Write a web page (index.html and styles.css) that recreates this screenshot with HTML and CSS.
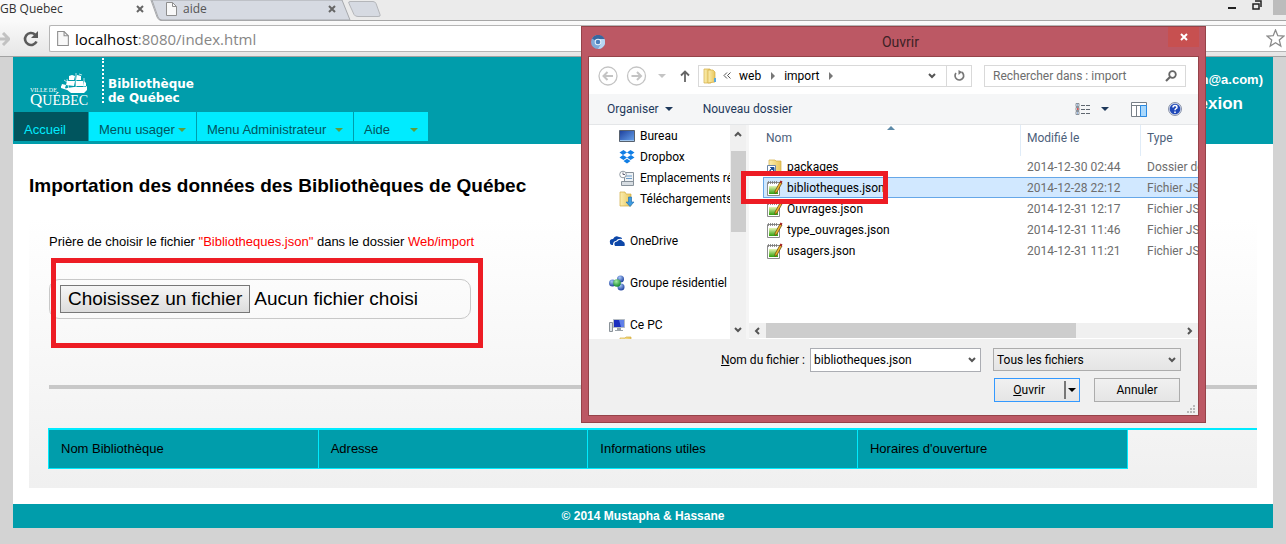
FILE: index.html
```html
<!DOCTYPE html>
<html lang="fr">
<head>
<meta charset="utf-8">
<title>SGB Quebec</title>
<link rel="stylesheet" href="styles.css">
</head>
<body>
<svg class="defs" aria-hidden="true">
  <defs>
    <linearGradient id="folder" x1="0" x2="1"><stop offset="0" stop-color="#fbeeb0"/><stop offset="1" stop-color="#e9c75c"/></linearGradient>
    <linearGradient id="green" x1="0" y1="0" x2="0" y2="1"><stop offset="0" stop-color="#e6f5b4"/><stop offset="1" stop-color="#2f9e0c"/></linearGradient>
    <linearGradient id="screen" x1="0" y1="0" x2="1" y2="1"><stop offset="0" stop-color="#1c3f9c"/><stop offset="1" stop-color="#6aa5ee"/></linearGradient>
    <radialGradient id="ball" cx=".4" cy=".3" r=".7"><stop offset="0" stop-color="#a8c8f8"/><stop offset="1" stop-color="#1d3f9e"/></radialGradient>
    <radialGradient id="gball" cx=".4" cy=".3" r=".7"><stop offset="0" stop-color="#a5eba5"/><stop offset="1" stop-color="#128a2c"/></radialGradient>
    <symbol id="note" viewBox="0 0 16 16">
      <path d="M.5 2.500h12v13H.5z" fill="#fff" stroke="#8c8c8c"/>
      <path d="M2 6h9v8H2z" fill="url(#green)"/>
      <path d="M1.500 1v3M3.500 1v3M5.500 1v3M7.500 1v3M9.500 1v3" stroke="#777" stroke-width=".8"/>
      <path d="M13 2l2 1-5 9-2 1.500V11z" fill="#f0b429" stroke="#5b4210" stroke-width=".7"/>
      <path d="M13.500.5l2 1-1 2-2-1z" fill="#a32424"/>
    </symbol>
    <symbol id="doc" viewBox="0 0 11 14">
      <path d="M.5.5h6l4 4v9H.5z" fill="#f8f8f8" stroke="#8e8e8e"/><path d="M6.500.5v4h4" fill="none" stroke="#8e8e8e"/>
    </symbol>
    <symbol id="chev" viewBox="0 0 8 6"><path d="M1 1l3 3 3-3" fill="none" stroke="#555" stroke-width="2"/></symbol>
    <symbol id="tri" viewBox="0 0 8 4"><path d="M0 0h8L4 4z" fill="currentColor"/></symbol>
    <symbol id="cross" viewBox="0 0 8 8"><path d="M1 1l6 6M7 1L1 7" stroke="currentColor" stroke-width="2"/></symbol>
  </defs>
</svg>

<div class="browser">
  <div class="tabs">
    <svg class="tabs-shape" width="400" height="21" viewBox="0 0 400 21" aria-hidden="true">
      <path d="M152 0L158 17q1 3 4 3H350L342 0z" fill="#d6dae2" stroke="#a6a8ac"/>
      <path d="M0 0h150l7 17q1 3 4 4H0z" fill="#fafafa"/>
      <path d="M151 0l6 17q1 3 4 3" fill="none" stroke="#a6a8ac"/>
      <path d="M350 1.500h23q2 0 3 2l4 11q1 2-2 2h-20q-3 0-4-2l-5-11q-1-2 1-2z" fill="#d6dae2" stroke="#b4b6ba"/>
    </svg>
    <div class="tab tab-active"><span>GB Quebec</span><button class="plain tab-x" aria-label="Fermer l'onglet"><svg width="8" height="8"><use href="#cross"/></svg></button></div>
    <div class="tab"><svg width="11" height="14"><use href="#doc"/></svg><span>aide</span><button class="plain tab-x" aria-label="Fermer l'onglet"><svg width="8" height="8"><use href="#cross"/></svg></button></div>
    <div class="win-controls">
      <svg width="9" height="15"><path d="M1 8h8" stroke="#222" stroke-width="2"/></svg>
      <svg width="10" height="15"><path d="M1 4h6v5H1zM3 1h6v6" fill="none" stroke="#222" stroke-width="1.500"/></svg>
      <span class="win-close"></span>
    </div>
  </div>
  <div class="toolbar">
    <svg class="fwd" width="10" height="14" viewBox="0 0 10 14"><path d="M0 7h8M3 1l6 6-6 6" fill="none" stroke="#c2c2c2" stroke-width="3"/></svg>
    <button class="plain reload" aria-label="Actualiser"><svg width="16" height="16" viewBox="0 0 16 16"><path d="M13.500 10.500A6 6 0 1 1 12 3.500" fill="none" stroke="#5a5a5a" stroke-width="2.600"/><path d="M15 0v7H8z" fill="#5a5a5a"/></svg></button>
    <div class="omnibox">
      <svg width="12" height="15"><use href="#doc"/></svg>
      <span class="url">localhost<span class="url-rest">:8080/index.html</span></span>
      <svg class="star" width="19" height="19" viewBox="0 0 19 19"><path d="M9.500 1l2.300 5.700 6.200.4-4.700 4 1.500 6-5.300-3.300-5.300 3.300 1.500-6-4.700-4 6.200-.4z" fill="#fff" stroke="#8a8a8a" stroke-width="1.300"/></svg>
    </div>
  </div>
</div>

<div class="page">
  <header class="site-header">
    <div class="brand-row">
      <div class="brand">
        <svg class="city" width="58" height="38" viewBox="0 0 58 38" role="img" aria-label="Ville de Québec">
          <g fill="#fff">
            <path d="M39 4l3-1 3 1-1 4-5 0zM47 3l4 1 0 4-5 0zM37 9l8 0-1 5-8-1zM46 9l7 0 1 5-8 0zM32 12l4 1-1 3-4-1zM54 9l2 2 0 3-2 0zM37 16l7-1 11 0 2-1 0 4-3 3-13 0-5-4zM31 14l6 3 0 1-6-2z"/>
          </g>
          <path d="M37 7l2 11M46 1v18M54 6v12M34 8l3 2M49 2l3 1" stroke="#fff" stroke-width=".7"/>
          <text x="0" y="20" class="city-small">VILLE DE</text>
          <text x="0" y="33" class="city-cap">Q<tspan class="city-rest">UÉBEC</tspan></text>
        </svg>
        <p class="brand-name">Bibliothèque<br>de Québec</p>
      </div>
      <div class="account"><span class="mail">(admin@a.com)</span><a class="logout" href="#">Déconnexion</a></div>
    </div>
    <nav class="menu">
      <a class="menu-item active" href="#">Accueil</a>
      <a class="menu-item mid" href="#">Menu usager<svg width="8" height="4"><use href="#tri"/></svg></a>
      <a class="menu-item wide" href="#">Menu Administrateur<svg width="8" height="4"><use href="#tri"/></svg></a>
      <a class="menu-item" href="#">Aide<svg width="8" height="4"><use href="#tri"/></svg></a>
    </nav>
  </header>

  <main class="content">
    <h1>Importation des données des Bibliothèques de Québec</h1>
    <section class="panel">
      <p class="hint">Prière de choisir le fichier <em>"Bibliotheques.json"</em> dans le dossier <em>Web/import</em></p>
      <div class="picker">
        <input class="picker-input" type="file" id="source">
        <label class="picker-button" for="source">Choisissez un fichier</label>
        <span>Aucun fichier choisi</span>
        <div class="mark mark-picker"></div>
      </div>
      <hr class="rule">
      <div class="results">
        <table class="libraries">
          <tr><th>Nom Bibliothèque</th><th>Adresse</th><th>Informations utiles</th><th>Horaires d'ouverture</th></tr>
        </table>
      </div>
    </section>
  </main>
  <footer class="site-footer">© 2014 Mustapha &amp; Hassane</footer>
</div>

<div class="dialog" role="dialog" aria-label="Ouvrir">
  <div class="dialog-title">
    <svg class="app-icon" width="14" height="14" viewBox="0 0 14 14"><circle cx="7" cy="7" r="7" fill="#7fa9d8"/><path d="M7 7L1 3.500A7 7 0 0 1 13.500 4H7z" fill="#38679f"/><path d="M7 14a7 7 0 0 0 6.500-10H9l1 5z" fill="#b7d6f3"/><circle cx="7" cy="7" r="3.300" fill="#e8f2fb"/><circle cx="7" cy="7" r="2.300" fill="#4a7fbd"/></svg>
    <span class="title-text">Ouvrir</span>
    <button class="close" aria-label="Fermer"><svg width="8" height="8"><use href="#cross"/></svg></button>
  </div>
  <div class="dialog-main">
    <div class="nav-row">
      <svg class="history" width="52" height="20" viewBox="0 0 52 20" fill="none" stroke="#c4c4c4"><circle cx="10" cy="10" r="9" stroke-width="1.300"/><circle cx="38.500" cy="10" r="9" stroke-width="1.300"/><path d="M5.500 10H15M9.500 6l-4 4 4 4M43 10h-9.500M39 6l4 4-4 4" stroke-width="2"/></svg>
      <svg class="recent" width="8" height="4"><use href="#tri"/></svg>
      <svg class="up" width="10" height="12" viewBox="0 0 10 12" fill="none" stroke="#666" stroke-width="1.800"><path d="M5 12V1.500M1 5.500l4-4 4 4"/></svg>
      <div class="address">
        <svg width="14" height="16" viewBox="0 0 14 16"><path d="M1 1h6l1 2v12H1z" fill="url(#folder)" stroke="#d2ac43" stroke-width=".7"/><path d="M5 2h5l2 2v10l-7 1z" fill="url(#folder)" stroke="#d2ac43" stroke-width=".7"/><path d="M12 10v4" stroke="#5ba8dc" stroke-width="2"/></svg>
        <svg class="laquo" width="8" height="7" viewBox="0 0 8 7"><path d="M4 .5l-3 3 3 3M7.500.5l-3 3 3 3" fill="none" stroke="#555"/></svg><span>web</span>
        <svg class="sep" width="4" height="8"><path d="M0 0v8l4-4z" fill="#777"/></svg>
        <span>import</span>
        <svg class="sep" width="4" height="8"><path d="M0 0v8l4-4z" fill="#777"/></svg>
        <svg class="addr-chev" width="8" height="6"><use href="#chev"/></svg>
        <button class="refresh" aria-label="Actualiser"><svg width="12" height="12" viewBox="0 0 12 12"><path d="M8.500 2A4.300 4.300 0 1 1 3 3" fill="none" stroke="#777" stroke-width="1.700"/><path d="M5.500 0v5L9 2z" fill="#777"/></svg></button>
      </div>
      <div class="search"><input type="text" aria-label="Rechercher" placeholder="Rechercher dans : import"><svg width="12" height="12" viewBox="0 0 12 12"><circle cx="7.500" cy="4.500" r="3.300" fill="none" stroke="#666" stroke-width="1.800"/><path d="M5 7L1 11" stroke="#666" stroke-width="2.200"/></svg></div>
    </div>

    <div class="command-bar">
      <button class="plain">Organiser<svg width="8" height="4"><use href="#tri"/></svg></button>
      <button class="plain">Nouveau dossier</button>
      <div class="views">
        <svg width="16" height="13" viewBox="0 0 16 13" fill="none" stroke="#8b939c"><path d="M1 .5h3v3H1zM1 4.500h3v3H1zM1 8.500h3v3H1z"/><path d="M6 2.500h4M11 2.500h4M6 6.500h4M11 6.500h4M6 10.500h4M11 10.500h4" stroke="#5f6770"/><path d="M2 6h1.500" stroke="#d02020" stroke-width="1.500"/><path d="M2 2h1M2 10h1" stroke="#3b78c4"/></svg>
        <svg class="views-arrow" width="8" height="4"><use href="#tri"/></svg>
        <svg class="pane-icon" width="16" height="15" viewBox="0 0 16 15"><path d="M.5.5h15v14H.5z" fill="#fff" stroke="#777f87"/><path d="M1 3.500h14M5.500 3v11" stroke="#777f87"/><path d="M9.500 3.500h6v11h-6z" fill="#a9d8fc" stroke="#2b8ae2"/></svg>
        <svg width="14" height="14" viewBox="0 0 14 14"><circle cx="7" cy="7" r="6.500" fill="#cfd8ee" stroke="#8a93a8"/><circle cx="7" cy="7" r="5.300" fill="#2149b8"/><path d="M5 5.500q0-2 2-2t2 1.700q0 1-1 1.500t-1 1.500M7 9.500V11" fill="none" stroke="#fff" stroke-width="1.500"/></svg>
      </div>
    </div>

    <div class="panes">
      <ul class="places">
        <li class="sub"><svg width="16" height="16" viewBox="0 0 16 16"><path d="M.5 2.500h15v11H.5z" fill="url(#screen)" stroke="#57616e"/><path d="M1 12.500h14" stroke="#9fc5ee"/></svg>Bureau</li>
        <li class="sub"><svg width="16" height="16" viewBox="0 0 16 16"><path d="M4.500 1L8 3.500 4 6 .5 3.500zM11.500 1L15.500 3.500 12 6 8 3.500zM4 6l4 2.500L4.500 11 .5 8.500zM12 6l3.500 2.500-4 2.500L8 8.500zM4.500 12L8 9.700l3.500 2.300L8 14.500z" fill="#117ee5"/></svg>Dropbox</li>
        <li class="sub"><svg width="16" height="16" viewBox="0 0 16 16"><path d="M5.500 2.500h9v11h-9z" fill="#eef2f5" stroke="#87919a"/><path d="M7 6h6M7 8.500h6" stroke="#6d9cc8"/><path d="M2.500 11.500h12v4h-12z" fill="#d7dde2" stroke="#87919a"/><circle cx="4" cy="4.500" r="3.300" fill="#fff" stroke="#929ba3"/><path d="M4 2.500v2h2" fill="none" stroke="#667"/></svg>Emplacements récents</li>
        <li class="sub"><svg width="16" height="16" viewBox="0 0 16 16"><path d="M1 1h5l1 2h5v12H1z" fill="url(#folder)" stroke="#d2ac43" stroke-width=".7"/><path d="M9.500 6h3v5h2.500l-4 4.500-4-4.500h2.500z" fill="#3e9be0" stroke="#1b6bb0" stroke-width=".6"/></svg>Téléchargements</li>
        <li class="group"><svg width="16" height="16" viewBox="0 0 16 16"><path d="M1 10q-1-4 3-4 2-4 6-2 3 0 3 2-4-1-6 2-3 0-3 4-3 0-3-2z" fill="#0d47a8"/><path d="M6 13q-2-4 2-4.500 3-3.500 6 0 2.500 1 1.500 4.500z" fill="#0d47a8"/></svg>OneDrive</li>
        <li class="group"><svg width="16" height="16" viewBox="0 0 16 16"><circle cx="3.500" cy="8" r="3.500" fill="url(#ball)"/><circle cx="11.500" cy="4" r="3.500" fill="url(#ball)"/><circle cx="12" cy="12" r="3.500" fill="url(#ball)"/><circle cx="8" cy="8" r="3.800" fill="url(#gball)"/></svg>Groupe résidentiel</li>
        <li class="group"><svg width="16" height="16" viewBox="0 0 16 16"><path d="M.5 5.500h3v9h-3z" fill="#dde2e6" stroke="#8a9299"/><path d="M4.500 2.500h11v8h-11z" fill="#1b2fbf" stroke="#b5bcc3"/><path d="M10 3h5v7h-3z" fill="#5f7fe8"/><path d="M8 11h4v2h2v1H6v-1h2z" fill="#9aa2aa"/></svg>Ce PC</li>
        <li class="sub last"><svg width="16" height="16" viewBox="0 0 16 16"><path d="M1 3h5l1-1h5v12H1z" fill="url(#folder)" stroke="#d2ac43" stroke-width=".7"/></svg></li>
      </ul>
      <div class="vscroll"><svg class="flip" width="8" height="6"><use href="#chev"/></svg><span class="vthumb"></span><svg width="8" height="6"><use href="#chev"/></svg></div>
      <div class="listing">
        <table class="files">
          <colgroup><col class="col-name"><col class="col-date"><col></colgroup>
          <thead><tr><th>Nom<svg class="sort" width="8" height="4" viewBox="0 0 8 4"><path d="M0 4l4-4 4 4z" fill="#5d8aa8"/></svg></th><th>Modifié le</th><th>Type</th></tr></thead>
          <tbody>
            <tr><td><svg width="16" height="16" viewBox="0 0 16 16"><path d="M2 1h6l1 1h5v13H2z" fill="url(#folder)" stroke="#d2ac43" stroke-width=".7"/><path d="M.5 6.500h8v8h-8z" fill="#fff" stroke="#6b86a8"/><path d="M2.500 13q0-3 3-3.500M3.500 8.500H7V12z" fill="#174a94" stroke="#174a94"/></svg>packages</td><td>2014-12-30 02:44</td><td>Dossier de fichiers</td></tr>
            <tr class="selected"><td><svg width="16" height="16"><use href="#note"/></svg>bibliotheques.json</td><td>2014-12-28 22:12</td><td>Fichier JSON</td></tr>
            <tr><td><svg width="16" height="16"><use href="#note"/></svg>Ouvrages.json</td><td>2014-12-31 12:17</td><td>Fichier JSON</td></tr>
            <tr><td><svg width="16" height="16"><use href="#note"/></svg>type_ouvrages.json</td><td>2014-12-31 11:46</td><td>Fichier JSON</td></tr>
            <tr><td><svg width="16" height="16"><use href="#note"/></svg>usagers.json</td><td>2014-12-31 11:21</td><td>Fichier JSON</td></tr>
          </tbody>
        </table>
        <div class="hscroll"><svg class="left" width="8" height="6"><use href="#chev"/></svg><span class="hthumb"></span><svg class="right" width="8" height="6"><use href="#chev"/></svg></div>
      </div>
    </div>

    <div class="dialog-footer">
      <label for="filename"><u>N</u>om du fichier :</label>
      <div class="combo"><input id="filename" type="text" value="bibliotheques.json"><svg width="8" height="6"><use href="#chev"/></svg></div>
      <div class="filter"><select aria-label="Type de fichier"><option>Tous les fichiers</option></select><svg width="8" height="6"><use href="#chev"/></svg></div>
      <div class="actions">
        <button class="action primary"><span><u>O</u>uvrir</span><i class="split"></i><svg width="8" height="4"><use href="#tri"/></svg></button>
        <button class="action">Annuler</button>
      </div>
    </div>
    <svg class="grip" width="8" height="8" viewBox="0 0 8 8" fill="#b8b8b8"><path d="M6 0h2v2H6zM3 3h2v2H3zM6 3h2v2H6zM0 6h2v2H0zM3 6h2v2H3zM6 6h2v2H6z"/></svg>
  </div>
  <div class="mark mark-file"></div>
</div>
</body>
</html>
```

FILE: styles.css
```css
* { box-sizing: border-box; }
body {
  margin: 0;
  min-height: 100vh;
  position: relative;
  overflow: hidden;
  background: #d3d3d3;
  font-family: "Liberation Sans", Arial, sans-serif;
  font-size: 13px;
  color: #000;
}
svg { flex: none; display: block; }
.defs { position: absolute; width: 0; height: 0; }
.plain { border: 0; padding: 0; background: none; font: inherit; color: inherit; display: flex; align-items: center; }
.mark { position: absolute; border: 5px solid #ed1c24; pointer-events: none; }

/* browser frame */
.browser { font-family: "Open Sans", "Noto Sans", sans-serif; }
.tabs { position: relative; display: flex; height: 21px; background: #ebebeb; border-bottom: 1px solid #a6a6a6; font-size: 12px; line-height: 18px; color: #333; }
.tabs-shape { position: absolute; left: 0; top: 0; }
.tab { position: relative; display: flex; align-items: center; gap: 6px; width: 192px; height: 18px; color: #555; }
.tab-active { width: 144px; margin-right: 22px; color: #333; }
.tab-x { margin-left: auto; width: 8px; color: #666; }
.tab:not(.tab-active) { width: 170px; }
.win-controls { margin-left: auto; display: flex; gap: 16px; align-items: flex-start; }
.win-controls svg + svg { margin-right: -5px; }
.win-close { width: 13px; height: 15px; background: #bcbcbc; }
.toolbar { display: flex; align-items: center; height: 36px; background: linear-gradient(#fafafa, #e6e6e6); border-bottom: 1px solid #a2a2a2; }
.fwd { margin-right: 13px; }
.omnibox { flex: 1; display: flex; align-items: center; height: 27px; margin-left: 10px; padding: 0 1px 0 7px; background: #fff; border: 1px solid #b5b5b5; border-right: 0; border-radius: 2px 0 0 2px; }
.url { margin-left: 6px; font-size: 15px; line-height: 20px; }
.url-rest { color: #868686; }
.star { margin-left: auto; }

/* site */
.page { margin: 0 13px; background: #fff; }
.site-header { background: #009dab; color: #fff; padding: 0 0 3px 1px; }
.brand-row { display: flex; justify-content: space-between; height: 55px; }
.brand { display: flex; }
.city { margin: 15px 14px 0 16px; }
.city-small, .city-cap, .city-rest { font-family: "Liberation Serif", serif; fill: #fff; }
.city-small { font-size: 6px; }
.city-cap { font-size: 17px; }
.city-rest { font-size: 14px; }
.brand-name { margin: 1px 0 9px; padding: 19px 0 0 4px; border-left: 2px dotted #fff; font-family: "DejaVu Sans", sans-serif; font-weight: bold; font-size: 12px; line-height: 14px; }
.account { display: flex; flex-direction: column; align-items: flex-end; gap: 6px; padding: 14px 10px 0 0; font-weight: bold; line-height: 18px; }
.logout { margin-right: 20px; color: #fff; text-decoration: none; font-size: 17px; }
.menu { display: flex; gap: 1px; }
.menu-item { display: flex; align-items: center; justify-content: space-between; width: 74px; height: 29px; padding: 6px 10px 0; background: #00ebff; color: #00555e; text-decoration: none; font-size: 13px; line-height: 23px; }
.menu-item svg { color: #5f9e3c; }
.menu-item.mid { width: 107px; }
.menu-item.wide { width: 156px; }
.menu-item.active { background: #00555e; color: #00ebff; }
.content { padding: 30px 16px 16px; }
h1 { margin: 0 0 20px; font-size: 19px; line-height: 24px; }
.panel { padding: 13px 0 19px 20px; background: linear-gradient(#fff, #f0f0f0); }
.hint { margin: 0; padding: 3px 0; font-size: 13px; line-height: 16px; }
.hint em { font-style: normal; color: #f00; }
.picker { position: relative; display: flex; align-items: center; gap: 4px; width: 422px; height: 40px; margin: 26px 0 66px; padding: 0 10px; border: 1px solid #c8c8c8; border-radius: 10px; font-size: 19px; }
.picker-input { position: absolute; width: 1px; height: 1px; opacity: 0; }
.picker-button { padding: 0 7px; border: 1px solid #777; background: linear-gradient(#f6f6f6, #dcdcdc); line-height: 26px; }
.mark-picker { left: 1px; right: -13px; top: -22px; bottom: -30px; }
.rule { margin: 0; border: 0; height: 4px; background: #c8c8c8; }
.results { margin: 39px 0 0 -1px; border-top: 2px solid #00ebff; }
.libraries { width: 89.3%; table-layout: fixed; border-collapse: collapse; background: #009dab; }
.libraries th { height: 38px; padding: 0 12px 1px; border: 1px solid #00ebff; border-top: 0; text-align: left; font-weight: normal; font-size: 13px; }
.site-footer { height: 24px; background: #009dab; color: #fff; text-align: center; font-size: 12px; font-weight: bold; line-height: 24px; }

/* file dialog */
.dialog { position: absolute; left: 581px; top: 26px; width: 625px; padding: 0 6px 6px; background: #bc5864; border: 1px solid #954349; font-family: Roboto, "Open Sans", sans-serif; font-size: 12px; line-height: 16px; }
.dialog input, .dialog select, .dialog button { font: inherit; }
.dialog-title { display: flex; align-items: flex-start; justify-content: space-between; height: 29px; }
.app-icon { margin: 8px 0 0 3px; }
.title-text { margin: 5px 0 0 28px; font-size: 14px; line-height: 20px; color: #3d2226; }
.close { width: 31px; height: 20px; padding: 0; border: 0; background: #c75050; color: #fff; display: flex; align-items: center; justify-content: center; }
.dialog-main { position: relative; border: 1px solid #954349; background: #f0f0f0; }
.nav-row { display: flex; align-items: center; height: 37px; padding: 0 12px 0 9px; background: #fff; }
.recent { margin: 0 14px 0 8px; color: #c4c4c4; }
.address { display: flex; align-items: center; flex: 1; height: 22px; margin-left: 8px; padding-left: 4px; border: 1px solid #d9d9d9; }
.laquo { margin: 0 8px 0 6px; }
.sep { margin: 0 9px 0 10px; }
.addr-chev { margin: 0 10px 0 auto; }
.refresh { height: 20px; width: 25px; padding: 0 0 0 6px; border: 0; border-left: 1px solid #d9d9d9; background: none; }
.search { display: flex; align-items: center; width: 202px; height: 22px; margin-left: 12px; padding: 0 8px; border: 1px solid #d9d9d9; }
.search input { flex: 1; min-width: 0; padding: 0; border: 0; outline: 0; }
.search input::placeholder { color: #6d6d6d; opacity: 1; }
.command-bar { display: flex; align-items: center; gap: 30px; height: 31px; padding: 0 16px 0 18px; background: #f5f6f7; border-bottom: 1px solid #e4e6e8; color: #1e395b; }
.command-bar .plain { gap: 6px; }
.views { display: flex; align-items: center; margin-left: auto; }
.views-arrow { margin: 0 22px 0 10px; }
.pane-icon { margin-right: 21px; }
.panes { display: grid; grid-template-columns: 141px 16px 1fr; height: 214px; overflow: hidden; background: #fff; }
.places { margin: 0; padding: 0; list-style: none; overflow: hidden; height: 214px; }
.places li { display: flex; align-items: center; gap: 5px; height: 21px; padding-left: 30px; white-space: nowrap; }
.places .group { margin-top: 21px; padding-left: 20px; }
.places .last { height: 16px; }
.vscroll { display: flex; flex-direction: column; align-items: center; background: #f0f0f0; padding: 6px 0; }
.flip { transform: rotate(180deg); }
.vthumb { width: 15px; height: 81px; margin: 14px 0 auto; background: #cdcdcd; }
.listing { display: flex; flex-direction: column; justify-content: space-between; min-width: 0; border-left: 3px solid #f5f5f5; }
.files { table-layout: fixed; width: 100%; padding-left: 14px; border-spacing: 0; color: #6d6d6d; }
.col-name { width: 257px; }
.col-date { width: 120px; }
.files th { position: relative; height: 31px; padding: 0 0 6px 6px; text-align: left; font-weight: normal; color: #4c607a; }
.files th:first-child { padding-left: 3px; }
.files th + th { border-left: 1px solid #e0ecf8; }
.sort { position: absolute; left: 124px; top: 1px; }
.files td { height: 21px; padding: 0 0 0 7px; white-space: nowrap; overflow: hidden; border: 0 solid #66a7e8; }
.files td:first-child { display: flex; align-items: center; gap: 4px; padding-left: 4px; color: #000; }
.selected td { background: #d1e8ff; border-width: 1px 0; }
.selected td:first-child { border-left-width: 1px; padding-left: 3px; }
.hscroll { display: flex; align-items: center; height: 15px; margin-bottom: 1px; padding: 0 4px; background: #f0f0f0; }
.left { transform: rotate(90deg); }
.right { transform: rotate(-90deg); margin-left: auto; }
.hthumb { width: 310px; height: 15px; margin-left: 5px; background: #cdcdcd; }
.dialog-footer { display: grid; grid-template-columns: 1fr 171px 188px; column-gap: 12px; row-gap: 6px; align-items: start; padding: 9px 17px 13px 0; }
.dialog-footer label { margin-right: -7px; text-align: right; line-height: 24px; }
.combo, .filter { position: relative; display: flex; align-items: center; }
.combo svg, .filter svg { position: absolute; right: 5px; pointer-events: none; }
.combo input { width: 100%; height: 24px; padding: 0 20px 0 3px; border: 1px solid #abadb3; background: #fff; }
.filter select { width: 100%; height: 23px; padding: 0 3px; appearance: none; border: 1px solid #acacac; border-radius: 0; background: linear-gradient(#efefef, #e5e5e5); }
.actions { grid-column: 3; display: flex; justify-content: space-between; padding: 0 1px; }
.action { display: flex; align-items: center; justify-content: center; width: 86px; height: 24px; padding: 0; border: 1px solid #acacac; background: linear-gradient(#f0f0f0, #e5e5e5); color: #000; }
.primary { border-color: #3399ff; justify-content: flex-end; padding-right: 3px; }
.split { width: 2px; height: 18px; margin: 0 2px 0 19px; background: #777; }
.grip { position: absolute; right: 3px; bottom: 2px; }
.mark-file { left: 159px; top: 144px; width: 147px; height: 33px; }
```
